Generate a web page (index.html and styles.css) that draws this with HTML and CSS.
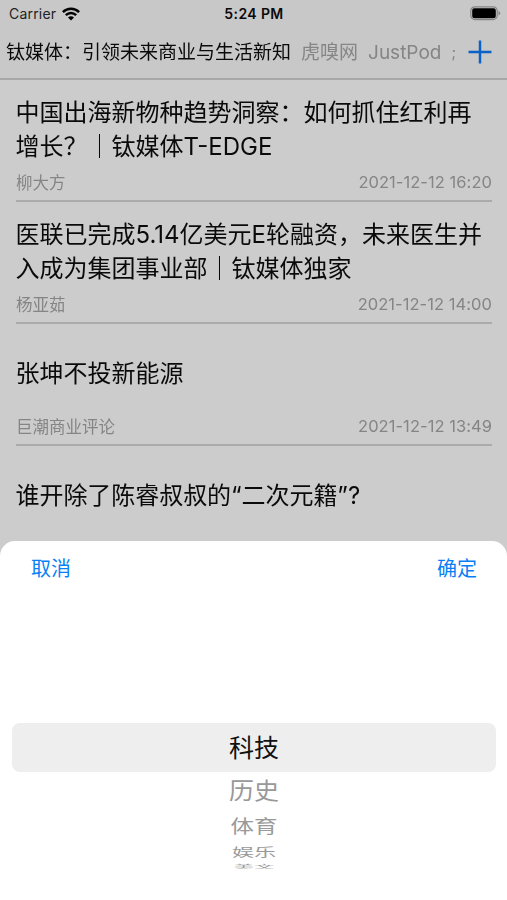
FILE: index.html
```html
<!DOCTYPE html>
<html lang="zh-CN">
<head>
<meta charset="utf-8">
<title>资讯</title>
<link rel="stylesheet" href="styles.css">
</head>
<body>
<div class="screen">
  <header class="top">
    <div class="status">
      <div class="carrier">Carrier
        <svg class="wifi" width="18" height="14" viewBox="0 0 18 14"><g fill="none" stroke="#000" stroke-width="2.4"><path d="M.9 5.1C5.4.6 12.6.6 17.1 5.1"/><path d="M3.8 8.2C6.8 5.3 11.2 5.3 14.2 8.2"/></g><path d="M6 10.4C7.8 8.9 10.2 8.9 12 10.4L9 13.5Z"/></svg>
      </div>
      <div class="clock">5:24 PM</div>
      <svg class="battery" width="31" height="15" viewBox="0 0 31 15"><rect x=".8" y=".8" width="26.4" height="12.8" rx="4" fill="none" stroke="#858585" stroke-width="1.2"/><rect x="2.2" y="2.2" width="23.6" height="10" rx="2.2"/><path d="M28.5 4.8Q30.2 5.8 30.2 7.2T28.5 9.6Z" fill="#858585"/></svg>
    </div>
    <nav class="tabs">
      <div class="tab-list">
        <span class="tab active">钛媒体：引领未来商业与生活新知</span>
        <span class="tab">虎嗅网</span>
        <span class="tab">JustPod</span>
        <span class="tab next">;</span>
      </div>
      <svg class="add" width="24" height="24" viewBox="0 0 24 24"><path d="M12 .5V23.5M.5 12H23.5" stroke="#0a62c8" stroke-width="2.5"/></svg>
    </nav>
  </header>
  <main class="feed">
    <article class="item"><h2>中国出海新物种趋势洞察：如何抓住红利再增长？｜钛媒体T-EDGE</h2><div class="meta"><span>柳大方</span><time>2021-12-12 16:20</time></div></article>
    <article class="item"><h2>医联已完成5.14亿美元E轮融资，未来医生并入成为集团事业部｜钛媒体独家</h2><div class="meta"><span>杨亚茹</span><time>2021-12-12 14:00</time></div></article>
    <article class="item"><h2>张坤不投新能源</h2><div class="meta"><span>巨潮商业评论</span><time>2021-12-12 13:49</time></div></article>
    <article class="item"><h2 class="tight">谁开除了陈睿叔叔的“二次元籍”?</h2></article>
  </main>
  <section class="sheet">
    <div class="actions"><span>取消</span><span>确定</span></div>
    <div class="picker">
      <div class="option selected"><span>科技</span></div>
      <div class="option o1"><span>历史</span></div>
      <div class="option o2"><span>体育</span></div>
      <div class="option o3"><span>娱乐</span></div>
      <div class="option o4"><span>美文</span></div>
    </div>
  </section>
</div>
</body>
</html>
```
FILE: styles.css
```css
* { box-sizing: border-box; }
body { margin: 0; font-family: Inter, "Noto Sans CJK SC", sans-serif; color: #0a0a0a; }
.screen { position: relative; width: 507px; height: 900px; overflow: hidden; background: #ccc; }
.top { height: 80px; background: #c8c8c8; border-bottom: 2px solid #a8a8a8; }
.status { height: 27px; padding: 0 6px 0 9px; display: grid; grid-template-columns: 1fr auto 1fr; align-items: center; font-size: 14px; }
.carrier { display: flex; align-items: center; gap: 6px; color: #222; letter-spacing: .2px; }
.clock { font-weight: 600; letter-spacing: .4px; margin-right: 2px; }
.battery { justify-self: end; }
.tabs { height: 50px; padding: 0 15px 0 6px; display: flex; align-items: center; justify-content: space-between; will-change: transform; }
.tab-list { width: 450px; margin-top: 2px; display: flex; gap: 10px; white-space: nowrap; font-size: 19px; line-height: 30px; }
.tab { flex: none; color: #858585; }
.tab.active { color: #0a0a0a; }
.tab.next { font-size: 15px; }
.feed { padding: 0 15px 0 16px; will-change: transform; }
.item { height: 122px; display: flex; flex-direction: column; border-bottom: 2px solid #ababab; }
.item:last-child { border: 0; }
.item h2 { height: 86px; margin: 7px -2px 0 -.5px; display: flex; align-items: center; font-size: 24px; line-height: 34px; font-weight: 400; }
.item .tight { letter-spacing: -.05px; }
.meta { display: flex; justify-content: space-between; font-size: 16.5px; line-height: 20px; color: #858585; }
.meta time { margin-top: -1px; letter-spacing: .05px; }
.sheet { position: absolute; left: 0; top: 541px; width: 507px; height: 359px; border-radius: 15px 15px 0 0; background: #fff; }
.actions { padding: 13px 30px 0 31px; display: flex; justify-content: space-between; font-size: 20px; line-height: 30px; color: #087ff5; }
.picker { margin: 139px 11px 0 12px; }
.option { display: flex; justify-content: center; align-items: center; font-size: 25px; color: #999; }
.selected { height: 49px; border-radius: 8px; background: #eee; color: #111; }
.option span { display: block; line-height: 30px; }
.o1 { height: 36px; }
.o1 span { transform: translateY(1px) scaleY(.93); }
.o2 { height: 36px; }
.o2 span { transform: scale(.94, .74); }
.o3 { height: 16px; }
.o3 span { transform: translateY(1px) scale(.88, .49); }
.o4 { height: 12px; }
.o4 span { transform: scale(.82, .18); }
```
